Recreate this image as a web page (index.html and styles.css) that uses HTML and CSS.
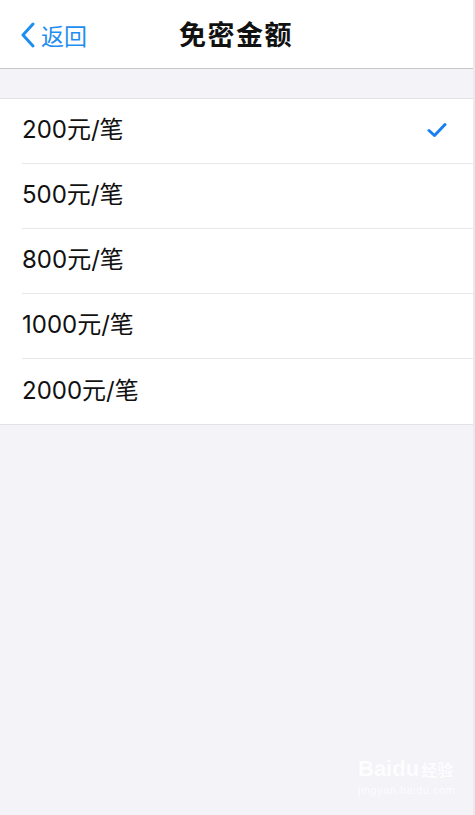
FILE: index.html
```html
<!DOCTYPE html>
<html lang="zh">
<head>
<meta charset="utf-8">
<link rel="stylesheet" href="styles.css">
</head>
<body>
<div class="page">
  <header class="nav">
    <div class="back">
      <svg class="chev" width="16" height="26" viewBox="0 0 16 26"><path d="M13 2 L3 13 L13 24" fill="none" stroke="#1f8ef1" stroke-width="3" stroke-linecap="round" stroke-linejoin="round"/></svg>
      <span>返回</span>
    </div>
    <h1 class="title">免密金额</h1>
  </header>
  <div class="gap"></div>
  <ul class="list">
    <li class="row"><span>200元/笔</span>
      <svg class="check" width="20" height="16" viewBox="0 0 20 16"><path d="M2 8.5 L7.5 13.5 L18 2.5" fill="none" stroke="#1a7ff0" stroke-width="3" stroke-linecap="round" stroke-linejoin="round"/></svg>
    </li>
    <li class="row"><span>500元/笔</span></li>
    <li class="row"><span>800元/笔</span></li>
    <li class="row"><span>1000元/笔</span></li>
    <li class="row"><span>2000元/笔</span></li>
  </ul>
  <div class="rest">
    <div class="mark">
      <div class="logo"><span class="big">Baidu</span><span class="cn">经验</span></div>
      <div class="url">jingyan.baidu.com</div>
    </div>
  </div>
</div>
</body>
</html>
```

FILE: styles.css
```css
* { box-sizing: border-box; }
html, body { margin: 0; padding: 0; }
body {
  width: 475px;
  height: 815px;
  background: #f3f3f8;
  font-family: "Noto Sans CJK SC", "Noto Sans", sans-serif;
  overflow: hidden;
}
.page {
  width: 475px;
  height: 815px;
  display: flex;
  flex-direction: column;
  border-right: 2px solid #e9e9ee;
}
.nav {
  height: 69px;
  background: #fff;
  border-bottom: 1px solid #c8c8cc;
  position: relative;
  display: flex;
  align-items: center;
  justify-content: center;
}
.back {
  position: absolute;
  left: 20px;
  top: 21px;
  display: flex;
  align-items: center;
  gap: 5px;
  color: #1f8ef1;
  font-size: 23px;
  line-height: 28px;
}
.chev { display: block; }
.title {
  margin: 0;
  font-size: 27px;
  font-weight: 700;
  color: #111;
  letter-spacing: 1.5px;
  line-height: 36px;
  margin-left: -1px;
}
.gap { height: 29px; }
.list {
  list-style: none;
  margin: 0;
  padding: 0 0 0 22px;
  background: #fff;
  border-top: 1px solid #e3e3e8;
  border-bottom: 1px solid #e3e3e8;
}
.row {
  height: 65px;
  display: flex;
  align-items: center;
  justify-content: space-between;
  padding-right: 26px;
  border-bottom: 1px solid #e8e8ec;
  font-family: Inter, "Noto Sans CJK SC", sans-serif;
  font-size: 24px;
  line-height: 30px;
  color: #111;
}
.row:last-child { border-bottom: none; }
.row span { margin-top: -2px; }
.check { display: block; margin-top: -2px; }
.rest { flex: 1; position: relative; }
.mark {
  position: absolute;
  left: 358px;
  top: 332px;
  color: #ffffff;
  font-family: "Liberation Sans", sans-serif;
  font-weight: 700;
  opacity: 0.85;
}
.logo { display: flex; align-items: baseline; line-height: 24px; }
.big { font-size: 22px; }
.cn { font-size: 16px; font-family: "Noto Sans CJK SC", sans-serif; margin-left: 2px; }
.url { font-size: 11px; font-weight: 400; line-height: 14px; letter-spacing: 0.5px; margin-top: 2px; }
```
